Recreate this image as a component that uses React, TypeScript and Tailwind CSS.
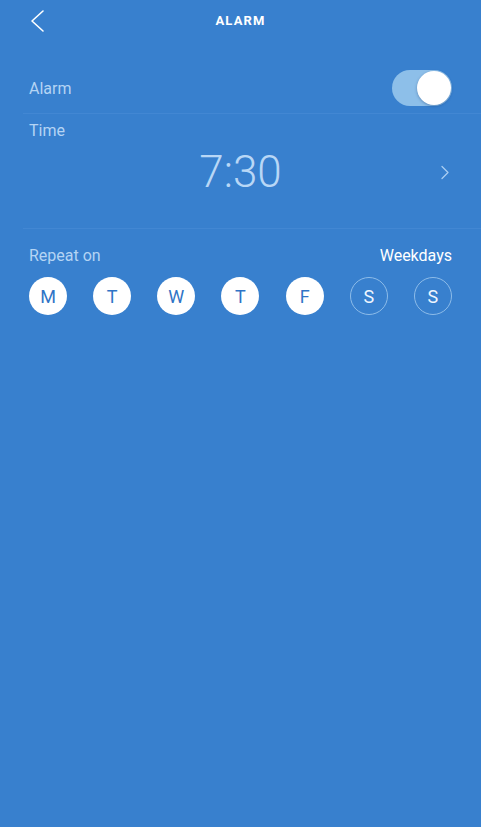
import { useState } from "react";

const DAYS = [
  { key: "mon", label: "M", on: true },
  { key: "tue", label: "T", on: true },
  { key: "wed", label: "W", on: true },
  { key: "thu", label: "T", on: true },
  { key: "fri", label: "F", on: true },
  { key: "sat", label: "S", on: false },
  { key: "sun", label: "S", on: false },
];

export default function App() {
  const [enabled, setEnabled] = useState(true);
  const [days, setDays] = useState(DAYS);

  const toggleDay = (key: string) =>
    setDays((d) => d.map((x) => (x.key === key ? { ...x, on: !x.on } : x)));

  return (
    <div className="min-h-[827px] w-full bg-[#3880ce] font-['Roboto','Open_Sans',sans-serif]">
      {/* Header */}
      <div className="relative flex h-[42px] items-center justify-center">
        <button className="absolute left-[29px] top-[9px] p-0">
          <svg width="16" height="24" viewBox="0 0 16 24" fill="none">
            <path d="M14 2 L3 12 L14 22" stroke="white" strokeWidth="1.6" strokeLinecap="round" strokeLinejoin="round" />
          </svg>
        </button>
        <h1 className="text-[13px] font-bold tracking-[0.09em] text-white">ALARM</h1>
      </div>

      {/* Alarm toggle row */}
      <div className="mt-[20px] flex h-[51px] items-center justify-between px-[29px]">
        <span className="pt-[2px] text-[16px] text-[#b4d4f4]">Alarm</span>
        <button
          onClick={() => setEnabled(!enabled)}
          className={`relative h-[36px] w-[60px] rounded-full ${enabled ? "bg-[#8dbfe9]" : "bg-[#5b97d8]"}`}
        >
          <span
            className={`absolute top-[1px] h-[34px] w-[34px] rounded-full bg-white shadow-[0_1px_3px_rgba(0,40,100,0.35)] ${
              enabled ? "right-[1px]" : "left-[1px]"
            }`}
          />
        </button>
      </div>
      <div className="ml-[23px] h-px bg-[#4287d3]" />

      {/* Time */}
      <div className="px-[29px] pt-[7px] pb-[32px]">
        <div className="text-[16px] leading-[20px] text-[#b4d4f4]">Time</div>
        <div className="relative mt-[7px] flex h-[48px] items-center justify-center">
          <span className="text-[44px] font-light leading-[48px] text-[#b8d7f6]">7:30</span>
          <svg className="absolute right-[2px] top-[17px]" width="10" height="15" viewBox="0 0 10 15" fill="none">
            <path d="M2 1.5 L8 7.5 L2 13.5" stroke="#a9cdf2" strokeWidth="1.3" strokeLinecap="round" strokeLinejoin="round" />
          </svg>
        </div>
      </div>
      <div className="ml-[23px] h-px bg-[#4287d3]" />

      {/* Repeat */}
      <div className="px-[29px] pt-[17px]">
        <div className="flex items-center justify-between text-[16px] leading-[20px]">
          <span className="text-[#b4d4f4]">Repeat on</span>
          <span className="text-white">Weekdays</span>
        </div>
        <div className="mt-[11px] flex justify-between">
          {days.map((d) => (
            <button
              key={d.key}
              onClick={() => toggleDay(d.key)}
              className={`flex h-[38px] w-[38px] items-center justify-center rounded-full text-[18px] ${
                d.on
                  ? "bg-white text-[#2f74c6]"
                  : "border border-[#8dbce9] text-[#eef6ff]"
              }`}
            >
              {d.label}
            </button>
          ))}
        </div>
      </div>
    </div>
  );
}
